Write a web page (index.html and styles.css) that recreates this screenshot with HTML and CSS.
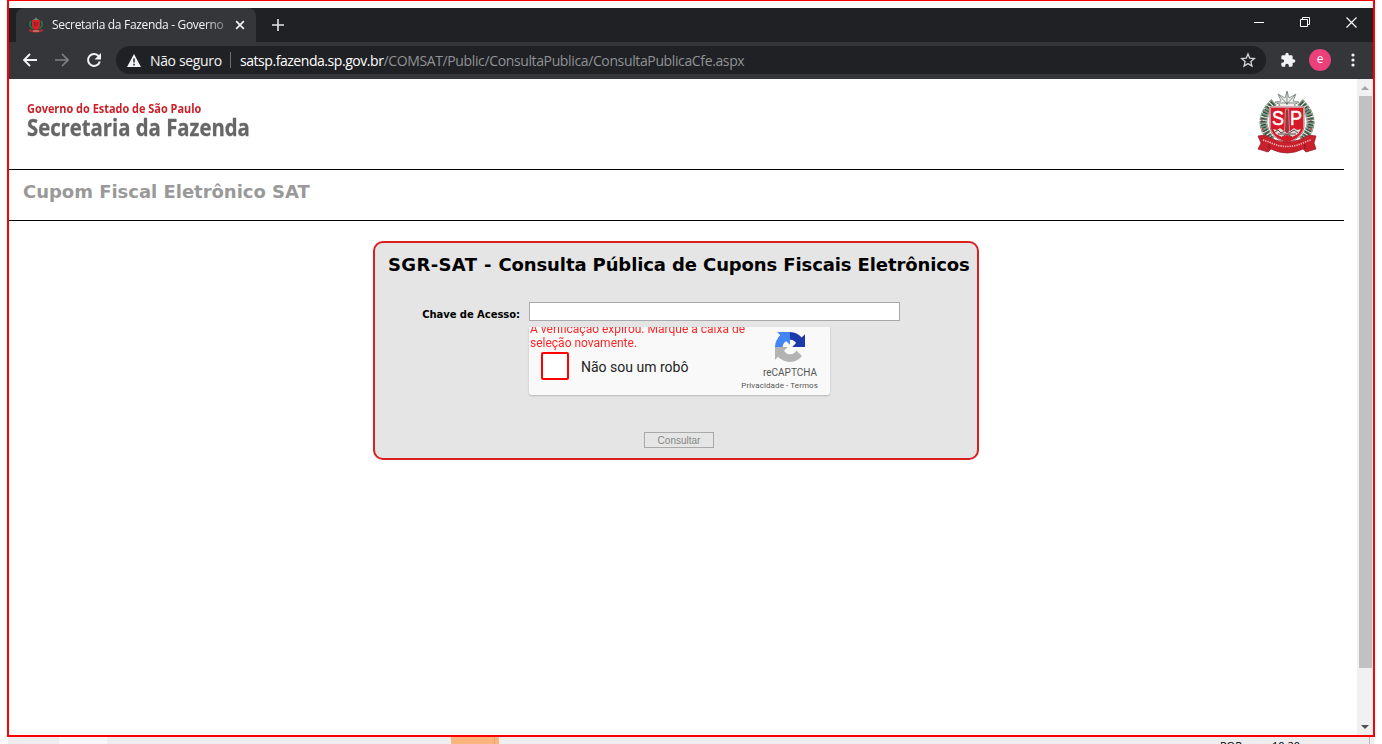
FILE: index.html
```html
<!DOCTYPE html>
<html lang="pt-BR">
<head>
<meta charset="utf-8">
<title>Secretaria da Fazenda - Governo</title>
<link rel="stylesheet" href="styles.css">
</head>
<body>
<div class="frame">
  <div class="tabstrip">
    <div class="tab">
      <svg class="favicon" viewBox="0 0 16 16"><path d="M3 4Q0 9 5 12M13 4Q16 9 11 12" fill="none" stroke="#1d7145" stroke-width="1.800"/><path d="M8 0l1 2 2 0-1 1H6L5 2h2z" fill="#6f8b74"/><path d="M4 3h8v6q0 3-4 4-4-1-4-4z" fill="#d3222a"/><path d="M6 6h2M6 8h2M9 6h1M9 8h1" stroke="#5a171c"/><path d="M1 12q7 3 14 0v2q-7 3-14 0z" fill="#b92c2c"/><path d="M5 14h6" stroke="#e0a19c"/></svg>
      <span class="tab-title">Secretaria da Fazenda - Governo</span>
      <svg class="tab-close" viewBox="0 0 10 10"><path d="M1.200 1.200l7.600 7.600M8.800 1.200L1.200 8.800" stroke="#f1f3f4" stroke-width="1.700"/></svg>
    </div>
    <svg class="newtab" viewBox="0 0 12 12"><path d="M6 0v12M0 6h12" stroke="#e3e5e8" stroke-width="1.600"/></svg>
    <div class="winbtns">
      <svg width="11" height="11" viewBox="0 0 11 11"><path d="M0 5.500h10" stroke="#fff"/></svg>
      <svg width="11" height="11" viewBox="0 0 11 11"><path d="M.5 2.500h7v7h-7zM2.500 2.500V.5h7v7h-2" fill="none" stroke="#fff"/></svg>
      <svg width="11" height="11" viewBox="0 0 11 11"><path d="M.5.5l10 10M10.500.5l-10 10" stroke="#fff" stroke-width="1.200"/></svg>
    </div>
  </div>
  <div class="toolbar">
    <svg class="nav back" viewBox="0 0 14 14"><path d="M14 7H1.500M7 1L1 7l6 6" fill="none" stroke="#f1f3f4" stroke-width="1.900"/></svg>
    <svg class="nav forward" viewBox="0 0 14 14"><path d="M0 7h12.500M7 1l6 6-6 6" fill="none" stroke="#7f8185" stroke-width="1.600"/></svg>
    <svg class="nav reload" viewBox="0 0 16 16"><path d="M12.800 4.300A6 6 0 1 0 13.800 9.500" fill="none" stroke="#f1f3f4" stroke-width="2"/><path d="M15 1v6.500H8.500z" fill="#f1f3f4"/></svg>
    <div class="omnibox">
      <svg class="warn" viewBox="0 0 14 13"><path d="M7 0l7 13H0z" fill="#f1f3f4"/><path d="M7 4.500v4M7 9.800v1.700" stroke="#202124" stroke-width="1.500"/></svg>
      <span class="secure">Não seguro</span>
      <span class="divider"></span>
      <span class="url"><span class="host">satsp.fazenda.sp.gov.br</span><span class="path">/COMSAT/Public/ConsultaPublica/ConsultaPublicaCfe.aspx</span></span>
      <svg class="star" viewBox="0 0 24 24"><path d="M12 3l2.600 6.200 6.900.6-5.200 4.500 1.600 6.700-5.900-3.600L6.100 21l1.600-6.700L2.500 9.800l6.900-.6z" fill="none" stroke="#d3d5d8" stroke-width="2"/></svg>
    </div>
    <svg class="puzzle" viewBox="0 0 24 24"><path d="M20.500 11H19V7a2 2 0 0 0-2-2h-4V3.500a2.500 2.500 0 0 0-5 0V5H4a2 2 0 0 0-2 2v3.800h1.500a2.700 2.700 0 0 1 0 5.400H2V20c0 1.100.9 2 2 2h3.800v-1.500a2.700 2.700 0 0 1 5.400 0V22H17a2 2 0 0 0 2-2v-4h1.500a2.500 2.500 0 0 0 0-5z" fill="#f1f3f4"/></svg>
    <span class="avatar">e</span>
    <svg class="dots" viewBox="0 0 4 14"><g fill="#f1f3f4"><circle cx="2" cy="2" r="1.600"/><circle cx="2" cy="7" r="1.600"/><circle cx="2" cy="12" r="1.600"/></g></svg>
  </div>
  <div class="viewport">
    <div class="page">
      <header class="masthead">
        <div class="brand">
          <div class="gov">Governo do Estado de São Paulo</div>
          <div class="dept">Secretaria da Fazenda</div>
        </div>
        <svg class="crest" viewBox="0 0 60 64">
          <g fill="none" stroke="#7f9682" stroke-width="8" stroke-dasharray="3 .7"><path d="M17 11Q-3 30 15 49"/><path d="M43 11Q63 30 45 49"/></g>
          <g fill="none" stroke="#344d3c" stroke-width="5" stroke-dasharray="1.300 1.700"><path d="M16 12Q-3 31 15 48"/><path d="M44 12Q63 31 45 48"/></g>
          <g fill="#b9535a"><circle cx="5" cy="29" r="1"/><circle cx="6" cy="38" r="1.200"/><circle cx="54" cy="29" r="1"/><circle cx="54" cy="38" r="1.200"/></g>
          <path d="M30 0l2 7 7-4-3 7 6 1-5 3 4 3H19l4-3-5-3 6-1-3-7 7 4z" fill="#edf0ed" stroke="#78827a" stroke-width=".8"/>
          <path d="M30 1v13M22 4l8 9 8-9M20 12h20" fill="none" stroke="#59645c" stroke-width=".7"/>
          <path d="M13 16h34v20q-1 11-17 16-16-5-17-16z" fill="#d71928" stroke="#fff" stroke-width="1.500"/>
          <path d="M13 16h34v20q-1 11-17 16-16-5-17-16z" fill="none" stroke="#8b2930" stroke-width=".7"/>
          <path d="M16 38l4 1 3-2 4 3h6l4-3 3 2 4-1-3 5-6 3-5-2-5 2-6-3z" fill="#ded9d7"/>
          <path d="M18 41l3-2 3 3 4-2 4 2 5-3 4 3M21 43h18M25 46l5-3 5 3" fill="none" stroke="#5c3337" stroke-width=".9"/>
          <path d="M28.500 18h3l1 22-2.500 3-2.500-3z" fill="#9d343b" stroke="#f0bfc0" stroke-width=".6"/>
          <text x="15" y="34" class="crest-letter" textLength="12" lengthAdjust="spacingAndGlyphs">S</text><text x="33" y="34" class="crest-letter" textLength="12" lengthAdjust="spacingAndGlyphs">P</text>
          <path d="M1 45l7-1q22 14 44 0l7 1-2 7 2 6-10 3-3-3q-16 8-32 0l-3 3-10-3 3-6z" fill="#ca202b" stroke="#8e1c27" stroke-width=".7"/>
          <path d="M6 49l6 2q18 9 36 0l6-2" fill="none" stroke="#efbabf" stroke-width="1.600" stroke-dasharray="1.300 1"/>
          <path d="M12 53v5M48 53v5" stroke="#791922"/>
        </svg>
      </header>
      <div class="subtitle"><h1>Cupom Fiscal Eletrônico SAT</h1></div>
      <main class="panel">
        <h2><span class="system">SGR-SAT - </span>Consulta Pública de Cupons Fiscais Eletrônicos</h2>
        <div class="field"><label for="key">Chave de Acesso:</label><input id="key" type="text"></div>
        <div class="captcha">
          <div class="check-area">
            <div class="error"><div>A verificação expirou. Marque a caixa de</div><div>seleção novamente.</div></div>
            <div class="check"><span class="box"></span><span class="robot">Não sou um robô</span></div>
          </div>
          <div class="captcha-brand">
            <svg class="recap" viewBox="0 0 64 64"><path d="M64 31.955l-.033-1.370V4.687l-7.160 7.160C50.948 4.674 42.033.093 32.050.093c-10.400 0-19.622 4.960-25.458 12.640l11.736 11.860a15.550 15.550 0 0 1 4.754-5.334c2.050-1.600 4.952-2.906 8.968-2.906.485 0 .860.057 1.135.163 4.976.393 9.288 3.140 11.828 7.124l-8.307 8.307z" fill="#1c3aa9"/><path d="M31.862.094l-1.370.033H4.594l7.160 7.160C4.580 13.147 0 22.060 0 32.046c0 10.400 4.960 19.622 12.640 25.458L24.500 45.768a15.550 15.550 0 0 1-5.334-4.754c-1.600-2.050-2.906-4.952-2.906-8.968 0-.485.057-.860.163-1.135.393-4.976 3.140-9.288 7.124-11.828l8.307 8.307z" fill="#4285f4"/><path d="M.001 32.045l.033 1.370v25.898l7.160-7.160c5.860 7.173 14.774 11.754 24.760 11.754 10.400 0 19.622-4.960 25.458-12.640l-11.736-11.860a15.550 15.550 0 0 1-4.754 5.334c-2.050 1.600-4.952 2.906-8.968 2.906-.485 0-.860-.057-1.135-.163-4.976-.393-9.288-3.140-11.828-7.124l8.307-8.307z" fill="#b3b3b3"/></svg>
            <span class="recap-name">reCAPTCHA</span>
            <span class="terms">Privacidade - Termos</span>
          </div>
        </div>
        <button class="submit">Consultar</button>
      </main>
    </div>
    <div class="scrollbar"><span class="up"></span><span class="thumb"></span><span class="down"></span></div>
  </div>
</div>
<div class="taskbar"><span class="task light"></span><span class="task orange"></span><span class="lang">POR</span><span class="clock">10:20</span><span class="peek"></span></div>
</body>
</html>
```
FILE: styles.css
```css
* { box-sizing: border-box; }
body { margin: 0; width: 1382px; height: 744px; overflow: hidden; background: #fff; font-family: "Open Sans", "Noto Sans", sans-serif; }
svg { display: block; flex: none; }
.frame { width: 1368px; height: 737px; margin-left: 7px; border: 2px solid #f00; border-top-width: 1px; padding-top: 7px; }
.tabstrip { display: flex; height: 34px; background: #202124; }
.tab { display: flex; align-items: center; width: 240px; margin-left: 7px; padding-left: 12px; border-radius: 8px 8px 0 0; background: #35363a; }
.favicon { width: 16px; height: 16px; }
.tab-title { width: 173px; margin-left: 8px; overflow: hidden; color: #f1f3f4; font-size: 12px; letter-spacing: -.32px; line-height: 18px; white-space: nowrap; -webkit-mask-image: linear-gradient(90deg, #000 88%, rgba(0,0,0,.35)); }
.tab-close { width: 10px; height: 10px; margin-left: 10px; }
.newtab { width: 12px; height: 12px; margin: 11px 0 0 16px; }
.winbtns { display: flex; gap: 35px; margin: 9px 16px 0 auto; }
.toolbar { display: flex; align-items: center; height: 37px; padding-bottom: 1px; background: #35363a; }
.nav { width: 14px; height: 14px; }
.back { margin-left: 14px; }
.forward { margin-left: 18px; }
.reload { width: 16px; height: 16px; margin-left: 17px; }
.omnibox { display: flex; align-items: center; width: 1150px; height: 28px; margin-left: 14px; padding: 0 10px 0 11px; border-radius: 14px; background: #202124; font-size: 14px; white-space: nowrap; }
.warn { width: 14px; height: 13px; }
.secure { width: 72px; margin-left: 9px; color: #f1f3f4; letter-spacing: -.35px; }
.divider { width: 1px; height: 16px; margin: 0 9px 0 8px; background: #6d6f73; }
.host { color: #fff; letter-spacing: -.45px; }
.path { color: #8f9297; letter-spacing: -.37px; }
.star { width: 16px; height: 16px; margin-left: auto; }
.puzzle { width: 16px; height: 16px; margin-left: 14px; }
.avatar { width: 22px; height: 22px; margin-left: 13px; border-radius: 50%; background: #ec407a; color: #fff; font-size: 12px; line-height: 20px; text-align: center; }
.dots { width: 4px; height: 14px; margin-left: 20px; }
.viewport { display: flex; height: 656px; background: #fff; }
.page { flex: 1; padding-right: 13px; }
.masthead { display: flex; justify-content: space-between; height: 91px; padding: 12px 27px 0 18px; border-bottom: 1px solid #000; }
.brand { width: 226px; padding-top: 9px; font-weight: bold; white-space: nowrap; }
.gov, .dept { width: max-content; transform-origin: left; }
.gov { color: #cb2027; font-size: 12px; line-height: 17px; transform: scaleX(.911); }
.dept { color: #666; font-size: 23px; line-height: 20px; transform: scaleX(.882); -webkit-text-stroke: .3px #666; }
.crest { width: 60px; height: 64px; }
.crest-letter { fill: #fff; stroke: #fff; stroke-width: .5px; font: 21px "Liberation Sans", sans-serif; }
.subtitle { height: 51px; padding: 11px 14px 0; border-bottom: 1px solid #000; }
h1, h2 { margin: 0; font: bold 18px/22px "DejaVu Sans", sans-serif; white-space: nowrap; letter-spacing: -.02px; }
h1 { color: #999; }
h2 { letter-spacing: -.11px; }
.system { letter-spacing: .36px; }
.panel { width: 606px; height: 219px; margin: 20px 0 0 364px; padding: 11px 0 0 13px; border: 2px solid #d8201f; border-radius: 10px; background: #e5e5e5; }
.field { display: flex; margin-top: 26px; }
label { width: 132px; padding-top: 6px; text-align: right; font: bold 10px/13px "DejaVu Sans", sans-serif; letter-spacing: -.05px; white-space: nowrap; }
input { width: 371px; height: 19px; margin-left: 9px; padding: 0; border: 1px solid #a9a9a9; background: #fff; }
.captcha { display: flex; width: 301px; height: 68px; margin: 6px 0 0 141px; border-radius: 0 0 3px 3px; background: #f9f9f9; box-shadow: 0 1px 2px rgba(0,0,0,.2); overflow: hidden; font-family: Roboto, sans-serif; }
.check-area { flex: 0 0 211px; min-width: 0; }
.error { padding-left: 1px; margin-top: -5px; color: #f00; font-size: 12px; line-height: 14px; white-space: nowrap; opacity: .85; }
.check { display: flex; align-items: center; padding-left: 12px; margin-top: 2px; }
.box { width: 28px; height: 28px; border: 2px solid #f00; border-radius: 2px; background: #fff; }
.robot { margin-left: 12px; padding-top: 2px; color: #222; font-size: 14px; }
.captcha-brand { display: flex; flex: none; flex-direction: column; align-items: flex-end; width: 79px; padding-top: 5px; color: #555; white-space: nowrap; }
.recap { width: 30px; height: 30px; margin-right: 14px; }
.recap-name { margin: 5px 2px 0 0; font-size: 10px; line-height: 12px; }
.terms { margin: 2px 1px 0 0; font-size: 8px; line-height: 9px; letter-spacing: .1px; }
.submit { display: block; width: 70px; height: 16px; margin: 37px 0 0 256px; padding: 1px 0 0; border: 1px solid #a9a9a9; background: #e5e5e5; color: #858585; font: 10px/14px "Liberation Sans", sans-serif; }
.scrollbar { display: flex; flex-direction: column; align-items: center; width: 16px; background: #f1f1f1; }
.up, .down { width: 0; border: 4px solid transparent; border-top: 0; border-bottom-color: #a3a3a3; margin-top: 7px; }
.thumb { width: 13px; height: 572px; margin: 6px 0 0 1px; background: #c1c1c1; }
.down { margin-top: auto; margin-bottom: 6px; border: 4px solid transparent; border-bottom: 0; border-top-color: #505050; }
.taskbar { display: flex; width: 1366px; height: 7px; margin-left: 8px; background: #eee; overflow: hidden; color: #000; font-size: 11px; line-height: 17px; }
.task { width: 48px; height: 7px; }
.light { margin-left: 51px; background: #f8f8f8; }
.orange { margin-left: 344px; background: #fdb57e; border-right: 4px solid #fdb57e; box-shadow: inset -1px 0 #f0a168; }
.lang { width: 28px; margin-left: 721px; }
.clock { margin-left: 24px; }
.peek { width: 1px; height: 7px; margin: 0 4px 0 auto; background: #bbb; }
```
